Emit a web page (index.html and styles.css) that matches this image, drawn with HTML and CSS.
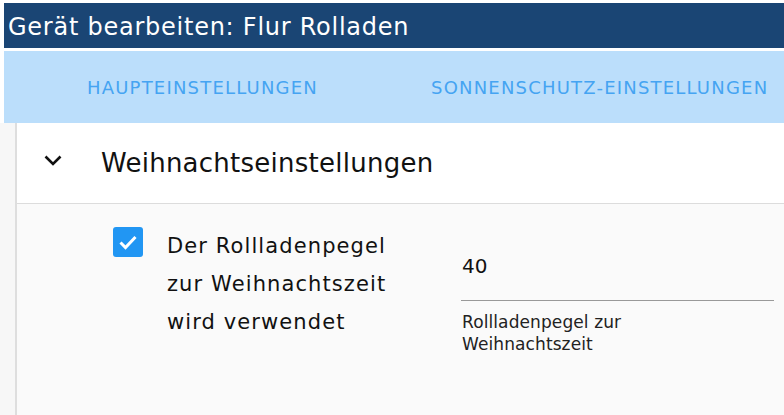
FILE: index.html
```html
<!DOCTYPE html>
<html lang="de">
<head>
<meta charset="utf-8">
<title>Gerät bearbeiten</title>
<link rel="stylesheet" href="styles.css">
</head>
<body>
<div class="top">
  <div class="titlebar">Gerät bearbeiten: Flur Rolladen</div>
  <div class="tabs">
    <span class="tab">HAUPTEINSTELLUNGEN</span>
    <span class="tab">SONNENSCHUTZ-EINSTELLUNGEN</span>
  </div>
</div>
<div class="panel">
  <div class="panel-head">
    <svg class="chevron" width="18" height="11" viewBox="0 0 18 11"><path d="M1.5 1.5 L9 9 L16.5 1.5" fill="none" stroke="#111" stroke-width="2.6"/></svg>
    <span class="panel-title">Weihnachtseinstellungen</span>
  </div>
  <div class="panel-body">
    <div class="check-row">
      <span class="checkbox"><svg width="30" height="30" viewBox="0 0 30 30"><path d="M7.5 15.5 L12.5 20.5 L22.5 10" fill="none" stroke="#fff" stroke-width="3"/></svg></span>
      <span class="check-label">Der Rollladenpegel zur Weihnachtszeit wird verwendet</span>
    </div>
    <div class="field">
      <div class="field-input">40</div>
      <div class="field-help">Rollladenpegel zur Weihnachtszeit</div>
    </div>
  </div>
</div>
</body>
</html>
```
FILE: styles.css
```css
html, body {
  margin: 0;
  padding: 0;
  height: 100%;
}
body {
  background: #f7f7f7;
  font-family: "DejaVu Sans", "Noto Sans", sans-serif;
  overflow: hidden;
}
.top {
  padding: 3px 0 0 4px;
  background: #fff;
}
.titlebar {
  height: 42px;
  padding-top: 3px;
  line-height: 42px;
  background: #1a4574;
  color: #fff;
  font-size: 24px;
  letter-spacing: 0.75px;
  padding-left: 4px;
  white-space: nowrap;
}
.tabs {
  margin-top: 3px;
  height: 72px;
  background: #bbdefb;
  display: flex;
  align-items: center;
  padding-left: 83px;
  gap: 113px;
}
.tab {
  color: #45a4f2;
  font-size: 18px;
  letter-spacing: 1.2px;
  white-space: nowrap;
}
.panel {
  margin-left: 15px;
  border-left: 2px solid #dedede;
  min-height: 300px;
  background: #fafafa;
}
.panel-head {
  height: 80px;
  background: #fff;
  border-bottom: 1px solid #dcdcdc;
  display: flex;
  align-items: center;
  padding-left: 27px;
}
.chevron {
  display: block;
  margin-top: -6px;
}
.panel-title {
  margin-left: 39px;
  font-size: 26px;
  letter-spacing: 0.25px;
  color: #111;
}
.panel-body {
  display: flex;
  padding: 23px 0 0 96px;
}
.check-row {
  display: flex;
  align-items: flex-start;
  width: 335px;
}
.checkbox {
  width: 30px;
  height: 30px;
  background: #2196f3;
  border-radius: 3px;
  flex: none;
}
.checkbox svg {
  display: block;
}
.check-label {
  margin-left: 24px;
  width: 235px;
  font-size: 21px;
  letter-spacing: 1.1px;
  line-height: 38px;
  color: #111;
}
.field {
  margin-left: 13px;
  width: 313px;
}
.field-input {
  margin-top: 27px;
  font-size: 20px;
  color: #111;
  padding-left: 1px;
  padding-bottom: 22px;
  border-bottom: 1px solid #999;
}
.field-help {
  margin-top: 10px;
  font-size: 17px;
  letter-spacing: 0.1px;
  line-height: 22px;
  color: #222;
  padding-left: 1px;
  width: 230px;
}
```
